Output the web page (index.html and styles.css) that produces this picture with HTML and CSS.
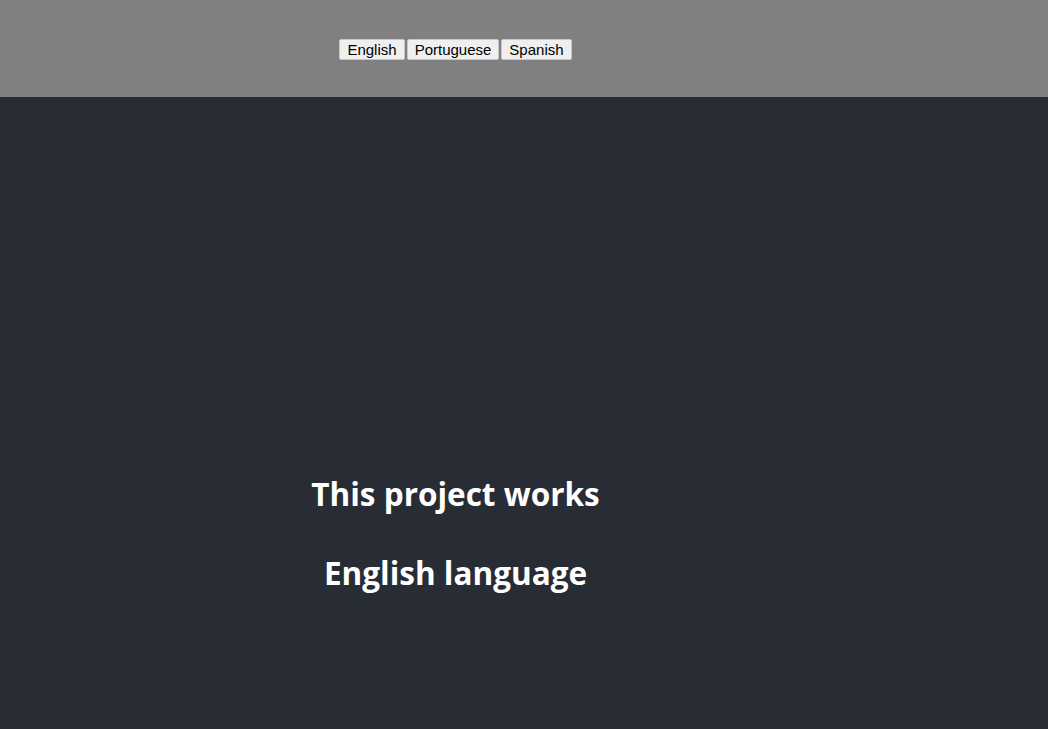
FILE: index.html
```html
<!DOCTYPE html>
<html>
<head>
<meta charset="utf-8">
<link rel="stylesheet" href="styles.css">
</head>
<body>
<header class="topbar">
  <div class="inner langs-wrap">
    <div class="langs">
      <button class="lang">English</button>
      <button class="lang">Portuguese</button>
      <button class="lang">Spanish</button>
    </div>
  </div>
</header>
<main class="stage">
  <div class="inner titles">
    <h1 class="title">This project works</h1>
    <h1 class="title">English language</h1>
  </div>
</main>
</body>
</html>
```
FILE: styles.css
```css
html, body {
  margin: 0;
  padding: 0;
  background: #282c34;
  overflow: hidden;
}
.inner {
  width: 911px;
}
.topbar {
  height: 97px;
  background: #808080;
  display: flex;
  align-items: center;
}
.langs-wrap {
  display: flex;
  justify-content: center;
  padding-top: 2px;
}
.langs {
  display: flex;
  gap: 2px;
}
.lang {
  font-family: "Liberation Sans", Arial, sans-serif;
  font-size: 15px;
  line-height: 17px;
  padding: 1px 7px;
  margin: 0;
  background: #efefef;
  color: #000;
  border: 1px solid #c8c8c8;
  border-radius: 2px;
}
.stage {
  height: 632px;
  color: #fff;
  font-family: "Open Sans", "Noto Sans", sans-serif;
}
.titles {
  display: flex;
  flex-direction: column;
  align-items: center;
  padding-top: 376px;
}
.title {
  margin: 0;
  font-size: 31.5px;
  font-weight: 700;
  line-height: 42px;
}
.title + .title {
  margin-top: 37px;
}
```
